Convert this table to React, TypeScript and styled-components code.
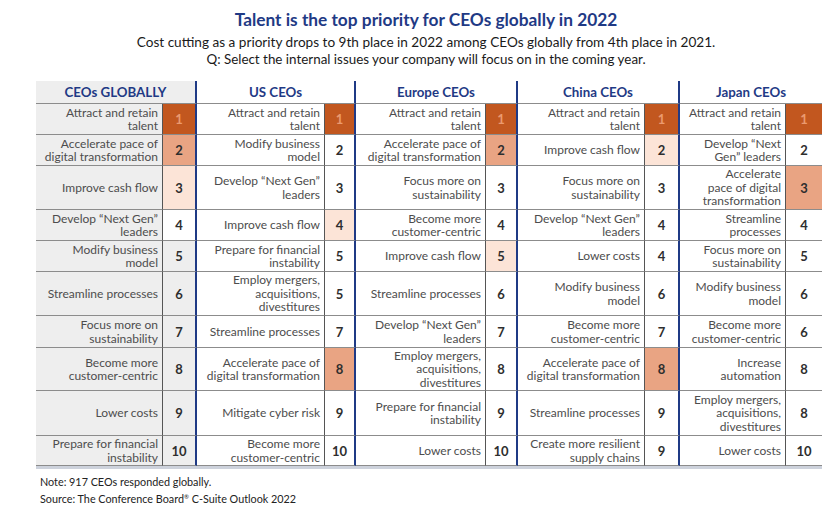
import styled, { createGlobalStyle } from 'styled-components'

type Shade = 'dark' | 'medium' | 'pale' | 'none'

type Item = {
  lines: string[]
  rank: number
  shade?: Shade
}

type Group = {
  title: string
  labelWidth: number
  rankWidth: number
  isGlobal?: boolean
  items: Item[]
}

const GROUPS: Group[] = [
  {
    title: 'CEOs GLOBALLY',
    labelWidth: 126,
    rankWidth: 32,
    isGlobal: true,
    items: [
      { lines: ['Attract and retain', 'talent'], rank: 1, shade: 'dark' },
      { lines: ['Accelerate pace of', 'digital transformation'], rank: 2, shade: 'medium' },
      { lines: ['Improve cash flow'], rank: 3, shade: 'pale' },
      { lines: ['Develop \u201cNext Gen\u201d', 'leaders'], rank: 4, shade: 'none' },
      { lines: ['Modify business', 'model'], rank: 5 },
      { lines: ['Streamline processes'], rank: 6 },
      { lines: ['Focus more on', 'sustainability'], rank: 7 },
      { lines: ['Become more', 'customer-centric'], rank: 8 },
      { lines: ['Lower costs'], rank: 9 },
      { lines: ['Prepare for financial', 'instability'], rank: 10 }
    ]
  },
  {
    title: 'US CEOs',
    labelWidth: 127,
    rankWidth: 29,
    items: [
      { lines: ['Attract and retain', 'talent'], rank: 1, shade: 'dark' },
      { lines: ['Modify business', 'model'], rank: 2 },
      { lines: ['Develop \u201cNext Gen\u201d', 'leaders'], rank: 3 },
      { lines: ['Improve cash flow'], rank: 4, shade: 'pale' },
      { lines: ['Prepare for financial', 'instability'], rank: 5 },
      { lines: ['Employ mergers,', 'acquisitions,', 'divestitures'], rank: 5 },
      { lines: ['Streamline processes'], rank: 7 },
      { lines: ['Accelerate pace of', 'digital transformation'], rank: 8, shade: 'medium' },
      { lines: ['Mitigate cyber risk'], rank: 9 },
      { lines: ['Become more', 'customer-centric'], rank: 10 }
    ]
  },
  {
    title: 'Europe CEOs',
    labelWidth: 129,
    rankWidth: 30,
    items: [
      { lines: ['Attract and retain', 'talent'], rank: 1, shade: 'dark' },
      { lines: ['Accelerate pace of', 'digital transformation'], rank: 2, shade: 'medium' },
      { lines: ['Focus more on', 'sustainability'], rank: 3 },
      { lines: ['Become more', 'customer-centric'], rank: 4 },
      { lines: ['Improve cash flow'], rank: 5, shade: 'pale' },
      { lines: ['Streamline processes'], rank: 6 },
      { lines: ['Develop \u201cNext Gen\u201d', 'leaders'], rank: 7 },
      { lines: ['Employ mergers,', 'acquisitions,', 'divestitures'], rank: 8 },
      { lines: ['Prepare for financial', 'instability'], rank: 9 },
      { lines: ['Lower costs'], rank: 10 }
    ]
  },
  {
    title: 'China CEOs',
    labelWidth: 126,
    rankWidth: 33,
    items: [
      { lines: ['Attract and retain', 'talent'], rank: 1, shade: 'dark' },
      { lines: ['Improve cash flow'], rank: 2, shade: 'pale' },
      { lines: ['Focus more on', 'sustainability'], rank: 3 },
      { lines: ['Develop \u201cNext Gen\u201d', 'leaders'], rank: 4 },
      { lines: ['Lower costs'], rank: 4 },
      { lines: ['Modify business', 'model'], rank: 6 },
      { lines: ['Become more', 'customer-centric'], rank: 7 },
      { lines: ['Accelerate pace of', 'digital transformation'], rank: 8, shade: 'medium' },
      { lines: ['Streamline processes'], rank: 9 },
      { lines: ['Create more resilient', 'supply chains'], rank: 9 }
    ]
  },
  {
    title: 'Japan CEOs',
    labelWidth: 105,
    rankWidth: 36,
    items: [
      { lines: ['Attract and retain', 'talent'], rank: 1, shade: 'dark' },
      { lines: ['Develop \u201cNext', 'Gen\u201d leaders'], rank: 2 },
      { lines: ['Accelerate', 'pace of digital', 'transformation'], rank: 3, shade: 'medium' },
      { lines: ['Streamline', 'processes'], rank: 4 },
      { lines: ['Focus more on', 'sustainability'], rank: 5 },
      { lines: ['Modify business', 'model'], rank: 6 },
      { lines: ['Become more', 'customer-centric'], rank: 6 },
      { lines: ['Increase', 'automation'], rank: 8 },
      { lines: ['Employ mergers,', 'acquisitions,', 'divestitures'], rank: 8 },
      { lines: ['Lower costs'], rank: 10 }
    ]
  }
]

// header row, then the ten ranks
const ROW_HEIGHTS = [23, 31, 31, 44, 31, 31, 44, 32, 43, 45, 30]

const SHADES: Record<Shade, string> = {
  dark: '#c2571f',
  medium: '#e9a483',
  pale: '#fce4d7',
  none: '#ffffff'
}

const NAVY = '#1f3a85'
const GRAY_BG = '#eeeeee'

const GlobalStyle = createGlobalStyle`
  body {
    margin: 0;
    background: #ffffff;
    font-family: Lato, 'Open Sans', 'Liberation Sans', sans-serif;
  }
`

export default function App() {
  const lastIndex = GROUPS.length - 1
  const columns = GROUPS.map((g, i) => `${g.labelWidth}px ${g.rankWidth + 1 + (i === lastIndex ? 0 : 2)}px`).join(' ')

  return (
    <>
      <GlobalStyle />
      <Page>
        <Heading>
          <Title>Talent is the top priority for CEOs globally in 2022</Title>
          <Subtitle>Cost cutting as a priority drops to 9th place in 2022 among CEOs globally from 4th place in 2021.</Subtitle>
          <Question>Q: Select the internal issues your company will focus on in the coming year.</Question>
        </Heading>

        <Table $columns={columns} $rows={ROW_HEIGHTS.map(h => `${h}px`).join(' ')}>
          {GROUPS.map((group, gi) => (
            <HeaderCell key={group.title} $isGlobal={!!group.isGlobal} $isLast={gi === lastIndex}>
              {group.title}
            </HeaderCell>
          ))}
          {ROW_HEIGHTS.slice(1).map((_, ri) =>
            GROUPS.map((group, gi) => {
              const item = group.items[ri]
              const shade = item.shade ?? (group.isGlobal ? undefined : 'none')
              return [
                <LabelCell key={`${gi}-${ri}-l`} $isGlobal={!!group.isGlobal}>
                  <span>
                    {item.lines.map((line, li) => (
                      <Line key={li}>{line}</Line>
                    ))}
                  </span>
                </LabelCell>,
                <RankCell
                  key={`${gi}-${ri}-r`}
                  $bg={shade ? SHADES[shade] : GRAY_BG}
                  $isDark={item.shade === 'dark'}
                  $isLast={gi === lastIndex}
                >
                  {item.rank}
                </RankCell>
              ]
            })
          )}
        </Table>

        <Footer>
          <FootLine>Note: 917 CEOs responded globally.</FootLine>
          <FootLine>
            Source: The Conference Board<Reg>®</Reg> C-Suite Outlook 2022
          </FootLine>
        </Footer>
      </Page>
    </>
  )
}

const Page = styled.div`
  width: 832px;
  height: 516px;
  display: flex;
  flex-direction: column;
  overflow: hidden;
`

const Heading = styled.header`
  display: flex;
  flex-direction: column;
  align-items: center;
  padding: 9px 0 0 20px;
`

const Title = styled.h1`
  margin: 0;
  color: ${NAVY};
  font-size: 17.3px;
  font-weight: 700;
  line-height: 22px;
`

const Subtitle = styled.p`
  margin: 3px 0 0;
  color: #1a1a1a;
  font-size: 13.6px;
  line-height: 17px;
`

const Question = styled.p`
  margin: 0;
  color: #1a1a1a;
  font-size: 13.4px;
  line-height: 17px;
`

const Table = styled.div<{ $columns: string; $rows: string }>`
  display: grid;
  grid-template-columns: ${p => p.$columns};
  grid-template-rows: ${p => p.$rows};
  margin: 13px 0 0 36px;
  width: max-content;
  border-bottom: 3px solid #cdd2dc;
`

const HeaderCell = styled.div<{ $isGlobal: boolean; $isLast: boolean }>`
  grid-column: span 2;
  display: flex;
  align-items: center;
  justify-content: center;
  background: ${p => (p.$isGlobal ? GRAY_BG : '#ffffff')};
  border-bottom: 1px solid #8c8c8c;
  border-right: ${p => (p.$isLast ? 'none' : `2px solid ${NAVY}`)};
  color: ${NAVY};
  font-size: 13.3px;
  font-weight: 700;
`

const LabelCell = styled.div<{ $isGlobal: boolean }>`
  display: flex;
  align-items: center;
  justify-content: flex-end;
  padding-right: 4px;
  background: ${p => (p.$isGlobal ? GRAY_BG : '#ffffff')};
  border-bottom: 1px solid #8c8c8c;
  color: #4d4d4d;
  font-size: 12px;
  line-height: 13.5px;
  text-align: right;
`

const Line = styled.span`
  display: block;
  white-space: nowrap;
`

const RankCell = styled.div<{ $bg: string; $isDark: boolean; $isLast: boolean }>`
  display: flex;
  align-items: center;
  justify-content: center;
  background: ${p => p.$bg};
  border-left: 1px solid #555555;
  border-bottom: 1px solid #8c8c8c;
  border-right: ${p => (p.$isLast ? 'none' : `2px solid ${NAVY}`)};
  color: ${p => (p.$isDark ? '#eb9a6f' : '#2e2e2e')};
  font-size: 13px;
  font-weight: 700;
`

const Footer = styled.footer`
  display: flex;
  flex-direction: column;
  padding: 5px 0 0 40px;
`

const FootLine = styled.div`
  color: #222222;
  font-size: 10.8px;
  line-height: 15px;
`

const Reg = styled.sup`
  font-size: 6px;
  vertical-align: 4px;
`
